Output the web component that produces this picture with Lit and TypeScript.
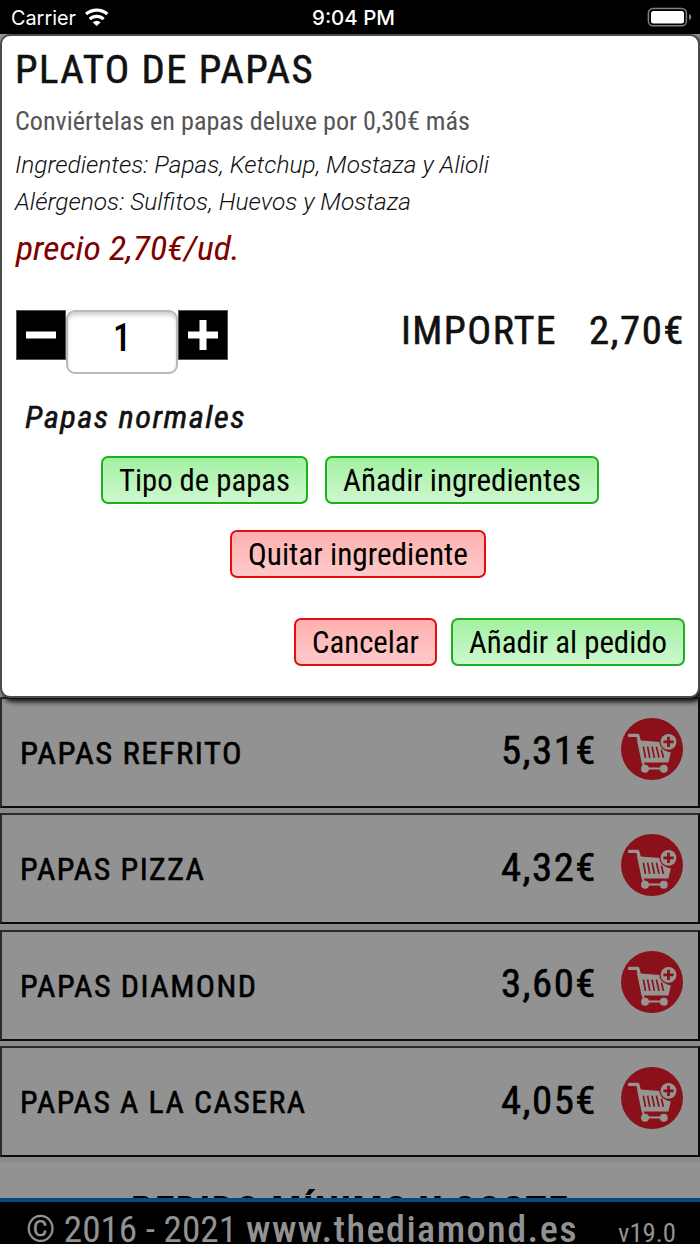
import { LitElement, html, css } from "lit";
import { customElement, property } from "lit/decorators.js";

const label = (text: string, width: number, size: number, cls = "") => html`
  <svg class="label ${cls}" width=${width} height=${Math.round(size * 1.25)} font-size=${size}>
    <text x="0" y=${size} textLength=${width} lengthAdjust="spacingAndGlyphs">${text}</text>
  </svg>`;

const labelStyles = css`
  .label { display: block; overflow: visible; flex: none; fill: currentColor; font-family: "Roboto Condensed", Roboto, sans-serif; font-weight: 400; }
  .medium { stroke: currentColor; stroke-width: 0.55px; }
  .bold { font-weight: 700; }
  .italic { font-style: italic; }
  .spaced { letter-spacing: 1.4px; }
  .light { font-family: Roboto, sans-serif; font-weight: 300; font-style: italic; }
  .system { font-family: Inter, sans-serif; }
`;

@customElement("status-bar")
export class StatusBar extends LitElement {
  static styles = [labelStyles, css`
    :host { display: grid; grid-template-columns: 1fr auto 1fr; height: 34px; background: #000; color: #fff; box-sizing: border-box; padding: 5px 8px 0 11px; }
    .left { display: flex; gap: 9px; }
    .right { display: flex; justify-content: flex-end; padding-top: 2px; }
    .time { padding-left: 3px; }
    .time .label { font-weight: 500; }
    svg { display: block; }
    .wifi { margin-top: 2px; }
  `];
  render() {
    return html`
      <div class="left">
        ${label("Carrier", 65, 20, "system")}
        <svg class="wifi" width="24" height="20" viewBox="85 7 24 20" fill="none" stroke="#fff" stroke-width="3.2">
          <path d="M86 14A16.5 16.5 0 0 1 107.4 14"/>
          <path d="M89.8 19.1A10.1 10.1 0 0 1 103.6 19.1"/>
          <path d="M92.7 22.3A6 6 0 0 1 100.7 22.3L96.7 26Z" fill="#fff" stroke="none"/>
        </svg>
      </div>
      <div class="time">${label("9:04 PM", 83, 20, "system")}</div>
      <div class="right">
        <svg width="45" height="20" viewBox="647 7 45 20">
          <rect x="648.4" y="8.4" width="38" height="17.4" rx="4.6" fill="none" stroke="#808080" stroke-width="1.5"/>
          <rect x="651" y="11" width="33" height="12.4" rx="2.5" fill="#fff"/>
          <path d="M689 14Q691.4 15 691.4 17T689 20.2Z" fill="#808080"/>
        </svg>
      </div>`;
  }
}

@customElement("cart-icon")
export class CartIcon extends LitElement {
  static styles = css`:host, svg { display: block; }`;
  render() {
    return html`
      <svg width="62" height="62" viewBox="-31 -31 62 62">
        <circle r="31" fill="#8a111a"/>
        <g fill="none" stroke="#979592">
          <path d="M-22.6 -13.6H-14.2L-12.2 -6" stroke-width="3.2" stroke-linejoin="round" stroke-linecap="round"/>
          <path d="M-15 -8.8L8 -7Q11 3 18.8 3.4L16.4 13.6H-10.4Z" fill="#979592" stroke="none"/>
          <path d="M-9.5 13L-7 19.6H11.5" stroke-width="2"/>
          <circle cx="-7" cy="19.8" r="4" fill="#979592" stroke="none"/>
          <circle cx="11.8" cy="19.8" r="4" fill="#979592" stroke="none"/>
        </g>
        <path d="M-8.6 -2.4L-6.6 8.8M-4.4 -2.4L-2.2 8.8M0 -2.4L2.4 8.8M4.4 -2.4L7 8.8M9.4 .6L11.4 8.8" stroke="#8a111a" stroke-width="1.7" fill="none"/>
        <circle cx="16.5" cy="-7.2" r="9.2" fill="#8a111a"/>
        <circle cx="16.5" cy="-7.2" r="7.9" fill="#979592"/>
        <path d="M11.4 -7.2H21.6M16.5 -12.3V-2.1" stroke="#8a111a" stroke-width="2.8"/>
      </svg>`;
  }
}

@customElement("dish-row")
export class DishRow extends LitElement {
  @property() name = "";
  @property() price = "";
  @property({ type: Number }) span = 0;
  static styles = [labelStyles, css`
    :host { display: flex; align-items: flex-start; height: 111px; box-sizing: border-box; padding: 0 15px 0 18px; background: #929292; color: #000;
      border: 2px solid #2b2b2b; border-bottom-color: #0c0c0c; border-right-color: #0c0c0c; }
    .name { margin-top: 34px; flex: 1; }
    .price { margin-top: 26.5px; margin-right: 24px; }
    cart-icon { margin-top: 19px; }
  `];
  render() {
    return html`
      <div class="name">${label(this.name, this.span, 30.5, "medium spaced")}</div>
      <div class="price">${label(this.price, 96, 39, "medium spaced")}</div>
      <cart-icon></cart-icon>`;
  }
}

@customElement("dish-dialog")
export class DishDialog extends LitElement {
  static styles = [labelStyles, css`
    :host { display: flex; flex-direction: column; box-sizing: border-box; background: #fff; color: #111; border: 2px solid #4b4b4b; border-radius: 10px;
      padding: 8px 13px 0 13px; box-shadow: 3px 4px 5px 0 #111; }
    .sub { color: #555; margin-top: 12px; }
    .ing { margin-top: 11.5px; }
    .alg { margin-top: 7px; }
    .unit { color: #800000; margin-top: 10.5px; margin-left: 1px; }
    .amount { display: flex; justify-content: space-between; margin-top: 40.5px; height: 64px; }
    .stepper { display: flex; align-items: flex-start; padding-left: 1px; }
    .key { display: grid; place-items: center; width: 50px; height: 50px; background: #000; box-sizing: border-box; border: 1px solid #555; }
    .key svg { display: block; }
    .qty { display: flex; justify-content: center; box-sizing: border-box; width: 112px; height: 64px; border: 2px solid #b9b9b9; border-radius: 9px;
      box-shadow: inset 0 4px 4px -1px #ccc; color: #000; }
    .qty .label { font-weight: 500; margin-top: -1px; }
    .total { display: flex; gap: 32px; margin-top: -5px; }
    .kind { margin: 23px 0 0 10px; }
    .row { display: flex; }
    .center { justify-content: center; gap: 17px; }
    .end { justify-content: flex-end; gap: 14px; }
    .r1 { margin-top: 21.5px; }
    .r2 { margin-top: 26px; padding-left: 16px; }
    .r3 { margin-top: 40px; }
    .btn { display: flex; justify-content: center; box-sizing: border-box; height: 48px; padding: 2px 16px 0; border: 2px solid; border-radius: 7px; color: #000; }
    .green { border-color: #1cb01c; background: linear-gradient(#a2f1a2, #cef8ce); }
    .red { border-color: #e30f0f; background: linear-gradient(#ffb0b0, #ffcaca); }
  `];
  private button(text: string, width: number, tone: string) {
    return html`<div class="btn ${tone}">${label(text, width, 30.5)}</div>`;
  }
  render() {
    return html`
      ${label("PLATO DE PAPAS", 299, 38.7, "medium spaced")}
      <div class="sub">${label("Conviértelas en papas deluxe por 0,30€ más", 455, 26)}</div>
      <div class="ing">${label("Ingredientes: Papas, Ketchup, Mostaza y Alioli", 474, 24, "light")}</div>
      <div class="alg">${label("Alérgenos: Sulfitos, Huevos y Mostaza", 396, 24, "light")}</div>
      <div class="unit">${label("precio 2,70€/ud.", 224, 34, "italic")}</div>
      <div class="amount">
        <div class="stepper">
          <div class="key"><svg width="30" height="30"><path d="M0 15H30" stroke="#fff" stroke-width="7"/></svg></div>
          <div class="qty">${label("1", 18, 39.5)}</div>
          <div class="key"><svg width="30" height="30"><path d="M0 15H30M15 0V30" stroke="#fff" stroke-width="7"/></svg></div>
        </div>
        <div class="total">${label("IMPORTE", 156, 39, "medium spaced")}${label("2,70€", 96, 39, "medium spaced")}</div>
      </div>
      <div class="kind">${label("Papas normales", 221, 30.5, "medium italic spaced")}</div>
      <div class="row center r1">${this.button("Tipo de papas", 171, "green")}${this.button("Añadir ingredientes", 238, "green")}</div>
      <div class="row center r2">${this.button("Quitar ingrediente", 220, "red")}</div>
      <div class="row end r3">${this.button("Cancelar", 107, "red")}${this.button("Añadir al pedido", 198, "green")}</div>`;
  }
}

@customElement("app-root")
export class AppRoot extends LitElement {
  static styles = [labelStyles, css`
    :host { display: flex; flex-direction: column; position: relative; width: 700px; height: 1244px; overflow: hidden; background: #929292; }
    .list { flex: 1; min-height: 0; overflow: hidden; box-sizing: border-box; padding-top: 662.5px; background: #929292; }
    .rows { display: flex; flex-direction: column; gap: 5.5px; background: #8a8a8a; padding-bottom: 5px; }
    .notice { display: flex; justify-content: center; padding-top: 22.5px; color: #000; }
    dish-dialog { position: absolute; top: 34px; left: 0; width: 700px; height: 664px; }
    footer { display: flex; height: 46px; box-sizing: border-box; border-top: 4px solid #004b82; background: #000; color: #929292; padding-left: 26px; flex: none; }
    .copy { margin-top: 2.5px; }
    .site { margin: 2.5px 0 0 9px; }
    .site .label { font-weight: 500; }
    .ver { margin: 14.5px 0 0 40px; }
  `];
  private dishes = [
    { name: "PAPAS REFRITO", price: "5,31€", span: 223 },
    { name: "PAPAS PIZZA", price: "4,32€", span: 185.5 },
    { name: "PAPAS DIAMOND", price: "3,60€", span: 237.5 },
    { name: "PAPAS A LA CASERA", price: "4,05€", span: 286.5 },
  ];
  render() {
    return html`
      <status-bar></status-bar>
      <div class="list">
        <div class="rows">
          ${this.dishes.map((d) => html`<dish-row .name=${d.name} .price=${d.price} .span=${d.span}></dish-row>`)}
        </div>
        <div class="notice">${label("PEDIDO MÍNIMO Y COSTE", 438, 39, "bold spaced")}</div>
      </div>
      <footer>
        <div class="copy">${label("© 2016 - 2021", 211, 37)}</div>
        <div class="site">${label("www.thediamond.es", 332, 37, "spaced")}</div>
        <div class="ver">${label("v19.0", 58, 25)}</div>
      </footer>
      <dish-dialog></dish-dialog>`;
  }
}
